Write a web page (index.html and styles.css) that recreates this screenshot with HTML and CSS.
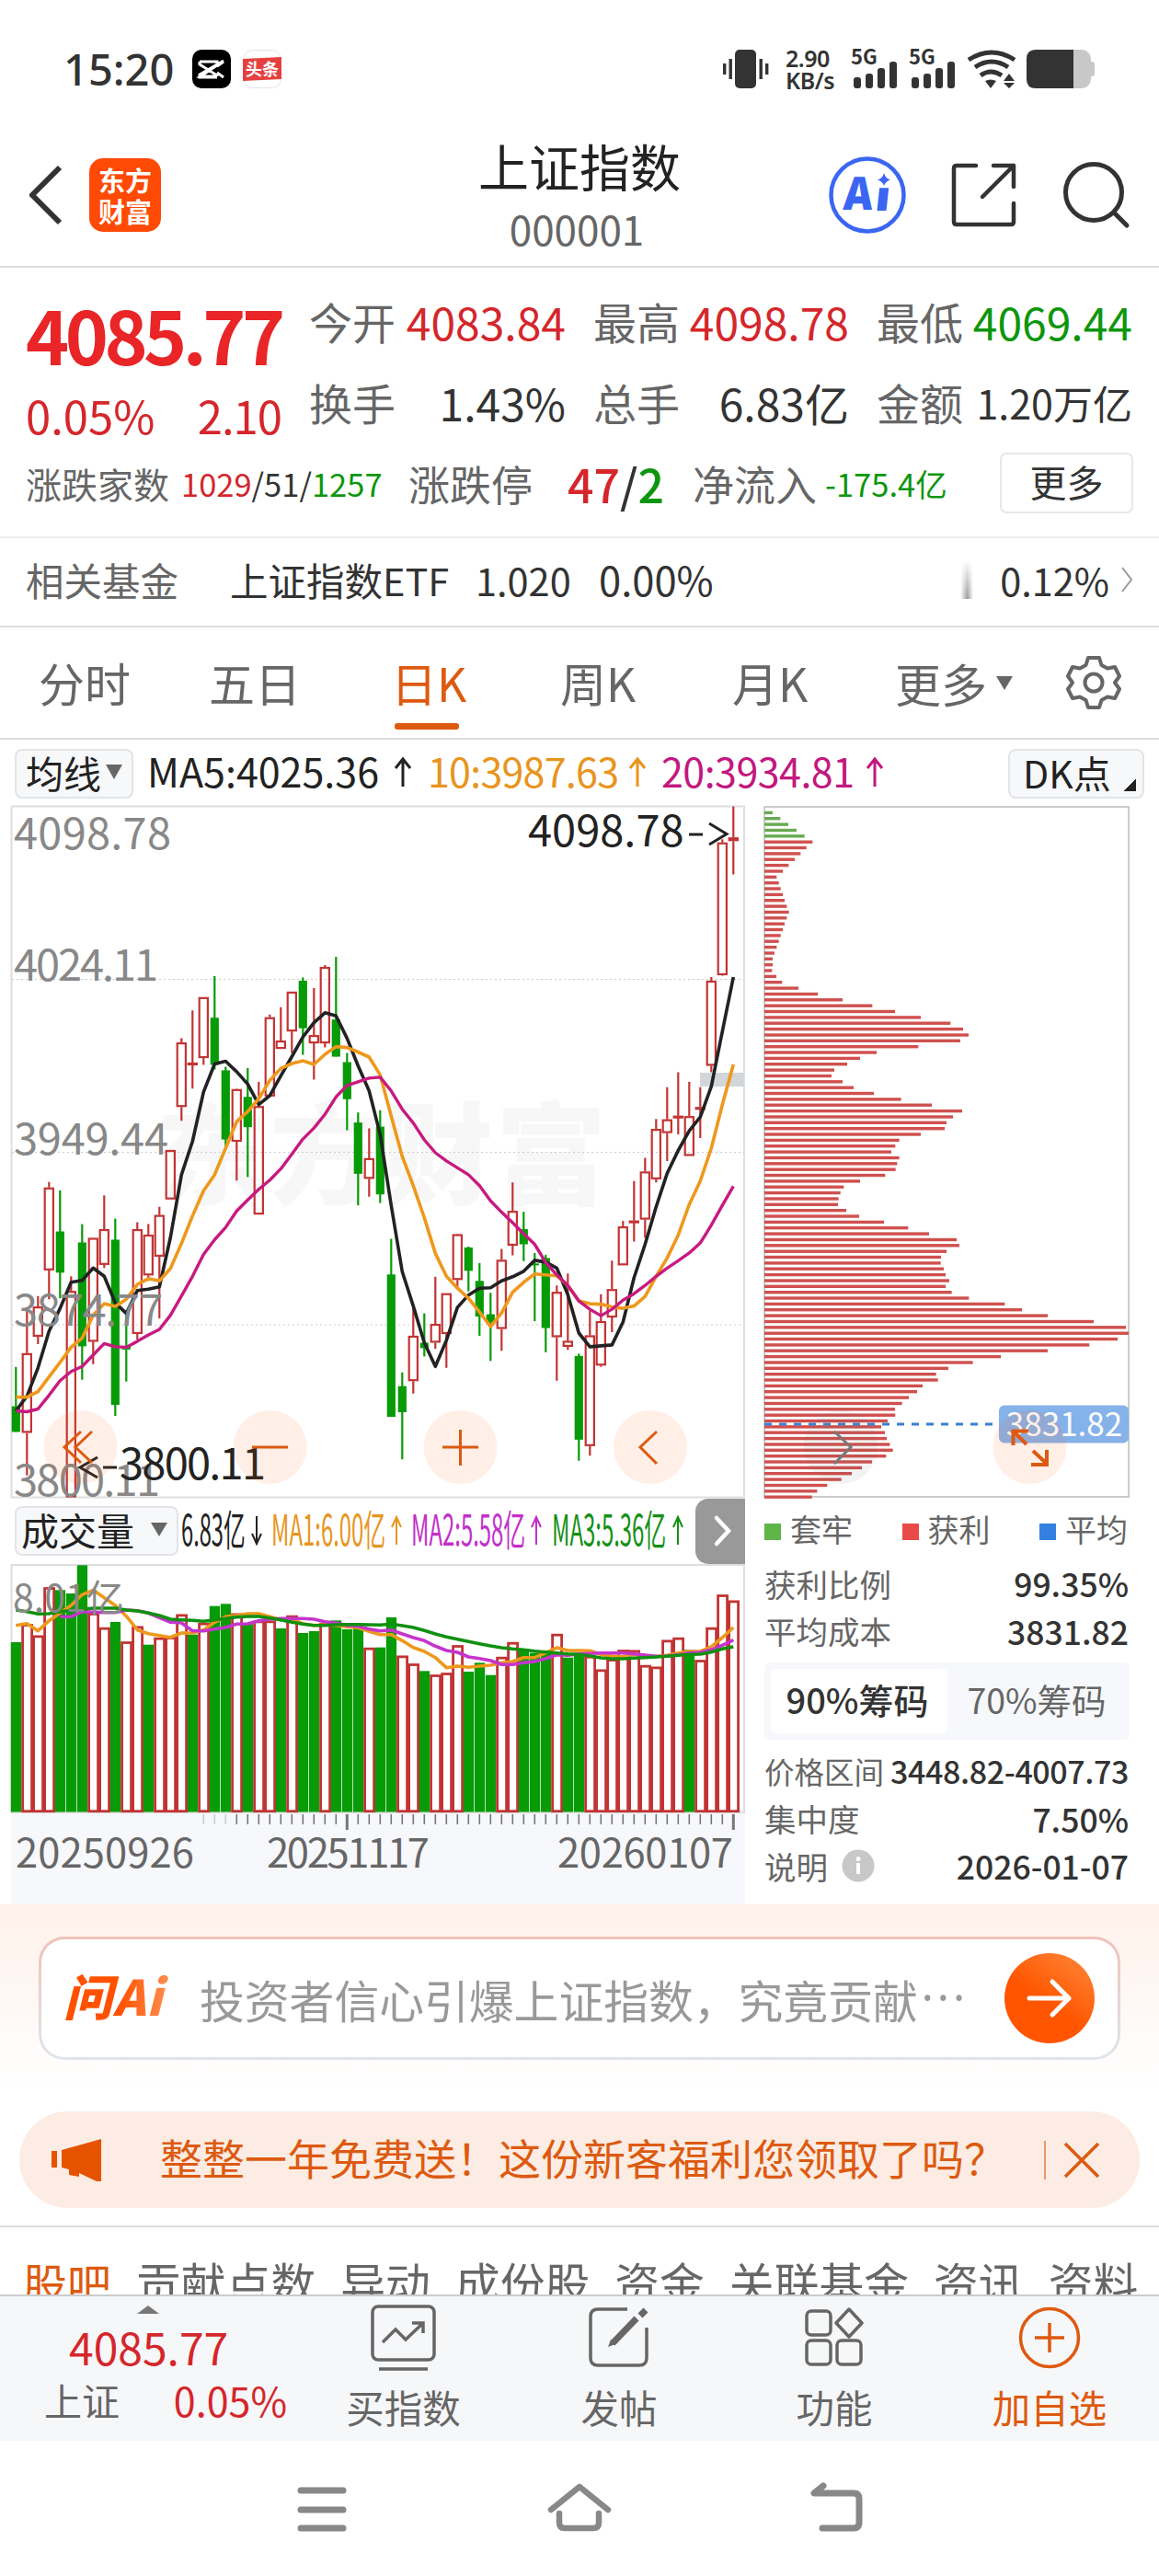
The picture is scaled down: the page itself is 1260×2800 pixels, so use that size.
FILE: index.html
```html
<!DOCTYPE html>
<html lang="zh-CN">
<head>
  <meta charset="UTF-8" />
  <meta name="viewport" content="width=device-width, initial-scale=1" />
  <title>上证指数 000001</title>
  <link rel="stylesheet" href="styles.css">
</head>
<body>
  <div class="phone">

    <!-- Status bar -->
    <div class="status">
      <span class="clock">15:20</span>
      <svg class="app-icon" width="42" height="42" viewBox="0 0 42 42">
        <rect width="42" height="42" rx="10" fill="#000"/>
        <path d="M8 13h19v4L9 29h18M8 13v3l19 12v1M34 12L8 27v3h19M27 18l7 -5M27 25l7 5" fill="none" stroke="#fff" stroke-width="3"/>
      </svg>
      <svg class="app-icon" width="42" height="42" viewBox="0 0 42 42">
        <rect x=".5" y=".5" width="41" height="41" rx="10" fill="#fff" stroke="#e4e4e4"/>
        <path d="M0 10L42 8V32L0 34Z" fill="#e5403f"/>
        <text x="21" y="28" font-size="18" font-weight="700" fill="#fff" text-anchor="middle">头条</text>
      </svg>
      <div class="status-right">
        <svg width="50" height="42" viewBox="0 0 50 42" fill="#333">
          <rect x="13" y="0" width="23" height="42" rx="5"/>
          <rect x="0" y="15" width="3.4" height="12"/><rect x="6.5" y="10" width="3.4" height="22"/>
          <rect x="39.500" y="10" width="3.4" height="22"/><rect x="46" y="15" width="3.4" height="12"/>
        </svg>
        <div class="speed"><span>2.90</span><span>KB/s</span></div>
        <svg class="signal" width="52" height="42" viewBox="0 0 52 42" fill="#333">
          <text x="0" y="16" font-size="22" font-weight="700">5G</text>
          <rect x="3" y="30" width="8" height="12" rx="3"/><rect x="16" y="26" width="8" height="16" rx="3"/>
          <rect x="29" y="20" width="8" height="22" rx="3"/><rect x="42" y="13" width="8" height="29" rx="3"/>
        </svg>
        <svg class="signal" width="52" height="42" viewBox="0 0 52 42" fill="#333">
          <text x="0" y="16" font-size="22" font-weight="700">5G</text>
          <rect x="3" y="30" width="8" height="12" rx="3"/><rect x="16" y="26" width="8" height="16" rx="3"/>
          <rect x="29" y="20" width="8" height="22" rx="3"/><rect x="42" y="13" width="8" height="29" rx="3"/>
        </svg>
        <svg class="wifi" width="54" height="42" viewBox="0 0 54 42">
          <path d="M2 11Q27 -5 52 11M9 19Q27 7 45 19M15 28Q26 20 38 28" fill="none" stroke="#333" stroke-width="5"/>
          <path d="M20 34Q26 31 32 34L26 42ZM40 34L46 26L52 34ZM40 36H52L46 42Z" fill="#333"/>
        </svg>
        <svg width="74" height="42" viewBox="0 0 74 42">
          <rect width="70" height="42" rx="10" fill="#c8c8c8"/><rect x="66" y="13" width="8" height="16" rx="3" fill="#c8c8c8"/>
          <path d="M10 0H51V42H10Q0 42 0 32V10Q0 0 10 0Z" fill="#333"/>
        </svg>
      </div>
    </div>

    <!-- Title bar -->
    <header class="topbar">
      <div class="topbar-left">
        <svg width="38" height="66" viewBox="0 0 38 66"><path d="M35 3L5 33L35 63" fill="none" stroke="#333" stroke-width="6" stroke-linejoin="round"/></svg>
        <div class="logo"><span>东方</span><span>财富</span></div>
      </div>
      <div class="title">
        <h1>上证指数</h1>
        <p>000001</p>
      </div>
      <div class="topbar-right">
        <svg width="84" height="86" viewBox="0 0 84 86">
          <circle cx="42" cy="43" r="39.500" fill="#fff" stroke="#3a66f2" stroke-width="4.500"/>
          <g class="ai-mark" font-size="50" font-weight="900" fill="#3a66f2">
            <text transform="translate(15 59) skewX(-4) scale(.88 1)">A</text>
            <text transform="translate(49 60) skewX(-6) scale(1.050 .9)">ı</text>
          </g>
          <path d="M60 19Q61.500 25 67 26.500Q61.500 28 60 33Q58.500 28 53 26.500Q58.500 25 60 19Z" fill="#3a66f2"/>
        </svg>
        <svg width="72" height="72" viewBox="0 0 72 72" fill="none" stroke="#333" stroke-width="4.500" stroke-linecap="round" stroke-linejoin="round">
          <path d="M27 4H6Q3 4 3 7V65Q3 68 6 68H65Q68 68 68 65V45"/><path d="M46 4H68V27M68 4L34 38"/>
        </svg>
        <svg width="74" height="74" viewBox="0 0 74 74" fill="none" stroke="#333" stroke-width="5"><circle cx="34" cy="34" r="30.500"/><path d="M56 56L70 70" stroke-linecap="round"/></svg>
      </div>
    </header>

    <!-- Quote -->
    <section class="quote">
      <div class="quote-main">
        <div class="price-col">
          <div class="price">4085.77</div>
          <div class="change"><span>0.05%</span><span class="amount">2.10</span></div>
        </div>
        <dl class="stats">
          <div><dt>今开</dt><dd class="up">4083.84</dd></div>
          <div><dt>最高</dt><dd class="up">4098.78</dd></div>
          <div><dt>最低</dt><dd class="down">4069.44</dd></div>
          <div><dt>换手</dt><dd>1.43%</dd></div>
          <div><dt>总手</dt><dd>6.83亿</dd></div>
          <div><dt>金额</dt><dd class="tight">1.20万亿</dd></div>
        </dl>
      </div>
      <div class="breadth">
        <span class="b-label small">涨跌家数</span>
        <span class="b-count"><i class="up">1029</i>/51/<i class="down">1257</i></span>
        <span class="b-label">涨跌停</span>
        <span class="b-limit"><i class="up">47</i>/<i class="down">2</i></span>
        <span class="b-label">净流入</span>
        <span class="b-flow down">-175.4亿</span>
        <button class="more-btn">更多</button>
      </div>
    </section>

    <section class="fund">
      <span class="fund-label">相关基金</span>
      <span class="fund-name">上证指数ETF</span>
      <span class="fund-price">1.020</span>
      <span class="fund-rate">0.00%</span>
      <span class="fund-fade"></span>
      <span class="fund-next">0.12%</span>
      <svg width="14" height="28" viewBox="0 0 14 28"><path d="M2 1L12 14L2 27" fill="none" stroke="#999" stroke-width="2"/></svg>
    </section>

    <!-- Period tabs -->
    <nav class="periods">
      <span>分时</span>
      <span>五日</span>
      <span class="active">日K</span>
      <span>周K</span>
      <span>月K</span>
      <span class="drop">更多<svg width="18" height="15" viewBox="0 0 18 15"><path d="M0 0H18L9 15Z" fill="#666"/></svg></span>
      <svg class="gear" width="60" height="60" viewBox="0 0 60 60" fill="none" stroke="#666" stroke-width="4" stroke-linejoin="round">
        <path d="M24 3H36L38.500 11L45 14.500L53 13L58 23L53 30L58 37L53 47L45 45.500L38.500 49L36 57H24L21.500 49L15 45.500L7 47L2 37L7 30L2 23L7 13L15 14.500L21.500 11Z"/>
        <circle cx="30" cy="30" r="9.500"/>
      </svg>
    </nav>

    <!-- Chart area -->
    <div class="ma-row">
      <div class="pill">均线<svg width="18" height="16" viewBox="0 0 18 16"><path d="M0 0H18L9 16Z" fill="#666"/></svg></div>
      <svg class="ma-text" width="820" height="56" viewBox="0 0 820 56">
        <g font-size="43">
          <text x="-3" y="44" fill="#222">MA5:4025.36</text>
          <text x="302" y="44" fill="#e8951e" textLength="208">10:3987.63</text>
          <text x="556" y="44" fill="#c2187f" textLength="210">20:3934.81</text>
        </g>
        <g fill="none" stroke-width="3">
          <path d="M275 43V13M267 23L275 13L283 23" stroke="#222"/>
          <path d="M530 43V13M522 23L530 13L538 23" stroke="#e8951e"/>
          <path d="M788 43V13M780 23L788 13L796 23" stroke="#c2187f"/>
        </g>
      </svg>
      <div class="pill dk">DK点</div>
    </div>

    <div class="charts">
      <div class="left-col">
        <svg id="kline" width="798" height="752" viewBox="12 876 798 752"></svg>
        <div class="vol-head">
          <div class="pill">成交量<svg width="18" height="15" viewBox="0 0 18 15"><path d="M0 0H18L9 15Z" fill="#666"/></svg></div>
          <svg class="vol-text" width="554" height="56" viewBox="196 1638 554 56">
            <g font-size="46">
              <text transform="translate(197 1682) scale(.515 1)" fill="#222">6.83亿</text>
              <text transform="translate(295 1682) scale(.520 1)" fill="#e8951e">MA1:6.00亿</text>
              <text transform="translate(447 1682) scale(.520 1)" fill="#c22fc9">MA2:5.58亿</text>
              <text transform="translate(600 1682) scale(.520 1)" fill="#159015">MA3:5.36亿</text>
            </g>
            <g fill="none" stroke-width="2">
              <path d="M279 1650V1680M274 1669L279 1680L284 1669" stroke="#222"/>
              <path d="M431 1681V1651M426 1662L431 1651L436 1662" stroke="#e8951e"/>
              <path d="M583 1681V1651M578 1662L583 1651L588 1662" stroke="#c22fc9"/>
              <path d="M737 1681V1651M732 1662L737 1651L742 1662" stroke="#159015"/>
            </g>
          </svg>
          <div class="scroll-tab"><svg width="20" height="34" viewBox="0 0 20 34"><path d="M3 3L16 17L3 31" fill="none" stroke="#fff" stroke-width="4.500" stroke-linecap="round"/></svg></div>
        </div>
        <svg id="volume" width="798" height="370" viewBox="12 1700 798 370"></svg>
      </div>

      <div class="right-col">
        <svg id="chips" width="398" height="752" viewBox="830 876 398 752"></svg>
        <div class="legend">
          <span><b class="sq green"></b>套牢</span>
          <span><b class="sq red"></b>获利</span>
          <span><b class="sq blue"></b>平均</span>
        </div>
        <div class="chip-row"><span>获利比例</span><strong>99.35%</strong></div>
        <div class="chip-row"><span>平均成本</span><strong>3831.82</strong></div>
        <div class="toggle"><span class="on">90%筹码</span><span>70%筹码</span></div>
        <div class="chip-row range"><span>价格区间</span><strong>3448.82-4007.73</strong></div>
        <div class="chip-row"><span>集中度</span><strong>7.50%</strong></div>
        <div class="chip-row"><span>说明<svg width="36" height="36" viewBox="0 0 36 36"><circle cx="18" cy="18" r="17.500" fill="#c8c8c8"/><path d="M18 15V27" stroke="#fff" stroke-width="4"/><circle cx="18" cy="10.500" r="2.500" fill="#fff"/></svg></span><strong>2026-01-07</strong></div>
      </div>

      <!-- Floating chart controls -->
      <svg class="controls" width="1260" height="84" viewBox="0 1531 1260 84" fill="none" stroke="#dd5a10" stroke-width="3">
        <g fill="rgba(255,100,20,.1)" stroke="none">
          <circle cx="87.500" cy="1573" r="40"/><circle cx="293.500" cy="1573" r="40"/><circle cx="500.500" cy="1573" r="40"/>
          <circle cx="707" cy="1573" r="40"/><circle cx="1119.500" cy="1573" r="40"/>
        </g>
        <circle cx="914" cy="1573" r="40" fill="rgba(100,100,100,.08)" stroke="none"/>
        <path d="M88 1556L70 1573L88 1590M100 1556L82 1573L100 1590"/>
        <path d="M274 1573H313"/>
        <path d="M481 1573H520M500.500 1554V1593"/>
        <path d="M714 1556L696 1573L714 1591"/>
        <path d="M907 1556L925 1573L907 1591" stroke="#777"/>
        <path d="M1116 1570L1102 1556M1101.500 1571V1555.500H1118M1123 1577L1138 1591M1138 1576V1592H1121" stroke-width="4"/>
      </svg>
    </div>

    <!-- Ask AI -->
    <section class="ask">
      <div class="ask-box">
        <span class="ask-logo">问Ai</span>
        <span class="ask-hint">投资者信心引爆上证指数，究竟贡献<span>···</span></span>
        <span class="ask-go"><svg width="50" height="44" viewBox="0 0 50 44"><path d="M3 22H46M28 4L46 22L28 40" fill="none" stroke="#fff" stroke-width="5" stroke-linecap="round" stroke-linejoin="round"/></svg></span>
      </div>
    </section>

    <div class="promo">
      <svg width="56" height="48" viewBox="0 0 56 48" fill="#e65300"><path d="M0 14H6V32H0ZM11 13L54 1V47H49L30 38V42L19 40V34L11 32Z"/></svg>
      <span class="promo-text">整整一年免费送！这份新客福利您领取了吗？</span>
      <i class="promo-line"></i>
      <svg width="38" height="38" viewBox="0 0 38 38"><path d="M1 1L37 37M37 1L1 37" stroke="#dd5a10" stroke-width="3.500"/></svg>
    </div>

    <nav class="sections">
      <span class="active">股吧</span><span>贡献点数</span><span>异动</span><span>成份股</span><span>资金</span><span>关联基金</span><span>资讯</span><span>资料</span>
    </nav>

    <!-- Bottom toolbar -->
    <footer class="toolbar">
      <div class="mini">
        <svg width="24" height="9" viewBox="0 0 24 9"><path d="M0 9L12 0L24 9Z" fill="#777"/></svg>
        <div class="mini-price">4085.77</div>
        <div class="mini-row"><span>上证</span><b>0.05%</b></div>
      </div>
      <div class="tool">
        <svg width="72" height="72" viewBox="0 0 72 72" fill="none" stroke="#666" stroke-width="3.500"><rect x="2" y="2" width="67" height="58" rx="6"/><path d="M13 41L27 27L38 38L57 20M45 20H57V31M9 70H62"/></svg>
        <span>买指数</span>
      </div>
      <div class="tool">
        <svg width="72" height="72" viewBox="0 0 72 72" fill="none" stroke="#666" stroke-width="3.500"><path d="M45 5H13Q5 5 5 13V58Q5 66 13 66H58Q66 66 66 58V25"/><path d="M29 42L55 15" stroke-width="7"/><path d="M59 12L65 6" stroke-width="7"/><path d="M24 46L32 43L27 38Z" fill="#666" stroke="none"/></svg>
        <span>发帖</span>
      </div>
      <div class="tool">
        <svg width="72" height="72" viewBox="0 0 72 72" fill="none" stroke="#666" stroke-width="3.500"><rect x="6" y="7" width="26" height="26" rx="5"/><rect x="6" y="39" width="26" height="26" rx="5"/><rect x="39" y="39" width="26" height="26" rx="5"/><path d="M52 5L66 20L52 35L38 20Z" stroke-linejoin="round"/></svg>
        <span>功能</span>
      </div>
      <div class="tool add">
        <svg width="72" height="72" viewBox="0 0 72 72" fill="none" stroke="#dd5a10" stroke-width="3.500"><circle cx="36" cy="36" r="31.500"/><path d="M20 36H52M36 20V52"/></svg>
        <span>加自选</span>
      </div>
    </footer>

    <div class="sysnav">
      <svg width="54" height="54" viewBox="0 0 54 54" stroke="#888" stroke-width="7" stroke-linecap="round"><path d="M4 9H50M4 30H50M4 50H50"/></svg>
      <svg width="70" height="54" viewBox="0 0 70 54" fill="none" stroke="#888" stroke-width="6.500" stroke-linecap="round"><path d="M4 30L35 5L66 30" stroke-linejoin="round"/><path d="M13 34V44Q13 50 19 50H50Q56 50 56 44V34"/></svg>
      <svg width="60" height="54" viewBox="0 0 60 54" fill="none" stroke="#888" stroke-width="7" stroke-linecap="round" stroke-linejoin="round"><path d="M16 4L6 12H49Q55 12 55 18V44Q55 50 49 50H15"/></svg>
    </div>
  </div>

  <script src="chart.js"></script>
</body>
</html>
```
FILE: styles.css
```css
* {
  box-sizing: border-box;
}
body {
  margin: 0;
  background: #fff;
  color: #333;
  font-family: "Noto Sans CJK SC", "Noto Sans", sans-serif;
}
svg {
  display: block;
  flex: none;
  overflow: visible;
}
svg text {
  font-family: "Noto Sans CJK SC", "Noto Sans", sans-serif;
}
i {
  font-style: normal;
}
.phone {
  width: 1260px;
  height: 2800px;
  overflow: hidden;
}
.up {
  color: #d5262b;
}
.down {
  color: #0c960c;
}

/* status bar */
.status {
  display: flex;
  align-items: center;
  height: 134px;
  padding: 16px 70px 0 69px;
}
.clock {
  width: 140px;
  font-family: "Noto Sans", sans-serif;
  font-size: 47px;
  font-weight: 500;
}
.app-icon {
  margin-right: 13px;
}
.status-right {
  display: flex;
  align-items: center;
  margin-left: auto;
}
.speed {
  display: flex;
  flex-direction: column;
  width: 71px;
  padding-left: 18px;
  font-family: "Noto Sans", sans-serif;
  font-size: 25px;
  font-weight: 600;
  line-height: 24px;
  letter-spacing: -.5px;
}
.signal {
  margin-right: 11px;
}
.speed + .signal {
  margin-left: 18px;
}
.wifi {
  margin-right: 11px;
}
.ai-mark text {
  font-family: "Noto Sans", sans-serif;
}

/* title bar */
.topbar {
  display: grid;
  grid-template-columns: 400px 1fr 400px;
  height: 157px;
  border-bottom: 2px solid #ddd;
}
.topbar-left {
  display: flex;
  align-items: center;
  padding-left: 30px;
  gap: 29px;
}
.logo {
  display: flex;
  flex-direction: column;
  align-items: center;
  justify-content: center;
  width: 78px;
  height: 80px;
  border-radius: 15px;
  background: #ff4a05;
  color: #fff;
  font-size: 29px;
  font-weight: 700;
  line-height: 34px;
}
.title {
  text-align: center;
}
.title h1 {
  margin: 8px 0 0;
  font-size: 55px;
  font-weight: 400;
  line-height: 74px;
  color: #222;
}
.title p {
  margin: 2px 6px 0 0;
  font-size: 44px;
  line-height: 60px;
  color: #666;
}
.topbar-right {
  display: flex;
  align-items: center;
  justify-content: flex-end;
  gap: 49px;
  padding-right: 31px;
}

/* quote */
.quote {
  height: 294px;
  padding: 17px 28px 0 28px;
  border-bottom: 2px solid #eee;
}
.quote-main {
  display: flex;
  gap: 30px;
}
.price-col {
  width: 278px;
  flex: none;
}
.price {
  font-size: 80px;
  font-weight: 700;
  line-height: 108px;
  letter-spacing: -4.500px;
  white-space: nowrap;
  color: #e92527;
}
.change {
  display: flex;
  justify-content: space-between;
  font-size: 49px;
  line-height: 70px;
  color: #d5262b;
}
.change .amount {
  letter-spacing: -1px;
}
.stats {
  flex: 1;
  display: grid;
  grid-template-columns: 279px 278px 278px;
  grid-auto-rows: 88px;
  column-gap: 30px;
  margin: -3px 0 0;
  font-size: 47px;
  line-height: 88px;
}
.stats div {
  display: flex;
  justify-content: space-between;
  white-space: nowrap;
}
.stats dt {
  color: #666;
}
.stats dd {
  margin: 0;
  font-size: 48px;
}
.stats .tight {
  font-size: 43px;
}
.breadth {
  display: flex;
  align-items: center;
  height: 78px;
  white-space: nowrap;
}
.b-label {
  width: 136px;
  font-size: 45px;
  color: #666;
}
.b-label.small {
  width: 169px;
  font-size: 39px;
}
.b-count {
  width: 247px;
  font-size: 34.500px;
}
.b-limit {
  width: 173px;
  padding-left: 37px;
  font-size: 50px;
  font-weight: 500;
}
.b-flow {
  padding-left: 8px;
  font-size: 34.500px;
}
.more-btn {
  width: 145px;
  height: 66px;
  margin-left: auto;
  padding: 0 0 6px;
  border: 2px solid #e8e8e8;
  border-radius: 7px;
  background: #fff;
  color: #333;
  font-family: inherit;
  font-size: 40px;
}

/* related fund */
.fund {
  display: flex;
  align-items: center;
  height: 97px;
  padding: 0 28px 6px;
  border-bottom: 2px solid #ddd;
  font-size: 41.500px;
  white-space: nowrap;
}
.fund-label {
  width: 222px;
  color: #666;
}
.fund-name {
  width: 267px;
}
.fund-price {
  width: 134px;
}
.fund-rate {
  font-size: 43.500px;
}
.fund-fade {
  width: 14px;
  height: 42px;
  margin-left: auto;
  background: linear-gradient(90deg, #fff, #999 55%, #fff);
  -webkit-mask-image: linear-gradient(transparent, #000);
  mask-image: linear-gradient(transparent, #000);
}
.fund-next {
  margin: 0 12px 0 29px;
}

/* period tabs */
.periods {
  display: flex;
  height: 122px;
  padding-left: 42px;
  border-bottom: 2px solid #ddd;
  font-size: 50px;
  line-height: 118px;
  color: #666;
  white-space: nowrap;
}
.periods span {
  width: 185px;
}
.periods span:nth-child(2) {
  width: 198px;
}
.periods .active {
  display: flex;
  flex-direction: column;
  width: 184px;
  color: #dd5a10;
}
.periods .active::after {
  content: "";
  width: 70px;
  height: 7px;
  margin: -14px 0 0 4px;
  border-radius: 3px;
  background: #dd5a10;
}
.periods span:nth-child(4) {
  width: 187px;
}
.periods span:nth-child(5) {
  width: 177px;
}
.periods .drop {
  display: flex;
  align-items: center;
  gap: 10px;
}
.periods .gear {
  margin: 30px 0 0 1px;
}

/* indicator row */
.pill {
  display: flex;
  align-items: center;
  height: 54px;
  padding: 0 10px 4px;
  border: 2px solid #e2e4e8;
  border-radius: 8px;
  background: #f7f8fa;
  color: #222;
  font-size: 41px;
  line-height: 50px;
  white-space: nowrap;
}
.ma-row {
  display: flex;
  align-items: center;
  height: 72px;
  padding: 0 16px 0 16px;
}
.ma-row .pill {
  gap: 5px;
  margin-top: 1px;
}
.ma-text {
  margin: 0 auto 0 18px;
}
.ma-row .dk {
  width: 148px;
  padding-left: 14px;
  background: linear-gradient(135deg, transparent 50%, #222 50%) right 7px bottom 6px / 14px 14px no-repeat, #f7f8fa;
}

/* charts */
.charts {
  position: relative;
  display: flex;
  gap: 20px;
  height: 1194px;
  padding-left: 12px;
}
.left-col {
  width: 798px;
}
.right-col {
  width: 398px;
}
.controls {
  position: absolute;
  left: 0;
  top: 655px;
}
.vol-head {
  display: flex;
  align-items: center;
  height: 72px;
  padding-left: 4px;
}
.vol-head .pill {
  width: 178px;
  padding: 0 10px 4px 5px;
  justify-content: space-between;
}
.vol-text {
  margin-left: 2px;
}
.scroll-tab {
  display: flex;
  align-items: center;
  width: 54px;
  height: 71px;
  margin-left: auto;
  padding-left: 20px;
  border-radius: 14px 0 0 14px;
  background: #999;
}
.legend {
  display: flex;
  justify-content: space-between;
  height: 67px;
  margin: 0 2px 0 1px;
  font-size: 34px;
  line-height: 70px;
  color: #666;
}
.legend span {
  display: flex;
  align-items: center;
  gap: 10px;
}
.sq {
  width: 18px;
  height: 18px;
  margin-top: 7px;
}
.sq.green { background: #5fb548; }
.sq.red { background: #e84a48; }
.sq.blue { background: #3380e0; }
.chip-row {
  display: flex;
  align-items: center;
  justify-content: space-between;
  height: 51.500px;
  padding: 0 1px;
  font-size: 34.500px;
  color: #666;
  white-space: nowrap;
}
.chip-row span {
  display: flex;
  align-items: center;
  gap: 15px;
}
.chip-row strong {
  color: #333;
  font-size: 35.500px;
  font-weight: 500;
}
.chip-row.range span {
  font-size: 32.500px;
}
.chip-row.range strong {
  font-size: 34px;
  letter-spacing: -.4px;
}
.toggle {
  display: grid;
  grid-template-columns: 192px 1fr;
  height: 84px;
  margin: 9px 0 8px 1px;
  padding: 7px 0 7px 7px;
  border-radius: 6px;
  background: #f7f8fb;
  font-size: 37.500px;
  line-height: 65px;
  text-align: center;
  color: #666;
}
.toggle span {
  padding-right: 4px;
}
.toggle .on {
  border-radius: 6px;
  background: #fff;
  color: #333;
  font-size: 38px;
  font-weight: 500;
}

/* ask ai */
.ask {
  height: 225px;
  padding: 35px 42px 0;
  background: linear-gradient(#fef1ea, #fff 90%);
}
.ask-box {
  display: flex;
  align-items: center;
  height: 134px;
  padding: 0 25px 0 24px;
  border: 3px solid transparent;
  border-radius: 28px;
  background: linear-gradient(#fff, #fff) padding-box, linear-gradient(#f0c2b8, #dfe5ee) border-box;
}
.ask-logo {
  flex: none;
  width: 148px;
  padding-bottom: 8px;
  font-size: 53px;
  font-weight: 900;
  font-style: italic;
  letter-spacing: 1px;
  background: linear-gradient(90deg, #ff5100 40%, #ff8a4a 75%);
  -webkit-background-clip: text;
  background-clip: text;
  color: transparent;
}
.ask-hint {
  flex: none;
  display: flex;
  font-size: 48.800px;
  color: #999;
  white-space: nowrap;
}
.ask-hint span {
  margin-left: 4px;
  font-family: "Noto Sans", sans-serif;
  letter-spacing: 4px;
}
.ask-go {
  display: flex;
  flex: none;
  align-items: center;
  justify-content: center;
  width: 98px;
  height: 98px;
  margin-left: auto;
  border-radius: 50%;
  background: linear-gradient(215deg, #ff8a3c, #ff5500 55%);
}

.promo {
  display: flex;
  align-items: center;
  height: 105px;
  margin: 0 21px;
  padding: 0 44px 0 35px;
  border-radius: 53px;
  background: #fcece3;
  color: #dd5a10;
}
.promo-text {
  margin: -7px 0 0 62px;
  font-size: 46px;
  white-space: nowrap;
}
.promo-line {
  width: 2px;
  height: 42px;
  margin: 0 20px 0 auto;
  background: #e59a6c;
}

.sections {
  display: flex;
  gap: 27px;
  height: 75px;
  margin-top: 19px;
  padding-left: 25px;
  border-top: 2px solid #ddd;
  overflow: hidden;
  font-size: 48.800px;
  line-height: 118px;
  white-space: nowrap;
  color: #666;
}
.sections .active {
  font-size: 48px;
  color: #dd5a10;
}

/* bottom toolbar */
.toolbar {
  display: grid;
  grid-template-columns: 321px 235px 234px 234px 234px;
  height: 159px;
  border-top: 2px solid #ccc;
  background: #f6f7f9;
  color: #666;
}
.mini {
  padding-top: 10px;
}
.mini > svg {
  margin-left: 149px;
}
.mini-price {
  margin-left: 75px;
  font-size: 48px;
  line-height: 64px;
  margin-top: 3px;
  color: #d5262b;
}
.mini-row {
  display: flex;
  justify-content: space-between;
  align-items: center;
  padding: 0 9px 0 48px;
  font-size: 41px;
  line-height: 52px;
}
.mini-row b {
  font-size: 43px;
  font-weight: 400;
  color: #d5262b;
}
.tool {
  display: flex;
  flex-direction: column;
  align-items: center;
  padding-top: 9px;
  font-size: 41.500px;
  line-height: 78px;
}
.tool.add {
  color: #dd5a10;
}
.sysnav {
  display: flex;
  align-items: center;
  height: 147px;
  padding: 0 0 4px 323px;
}
.sysnav svg + svg {
  margin-left: 218px;
}
.sysnav svg:last-child {
  margin-left: 214px;
}
```
FILE: chart.js
```js
const RED = '#c23434', GREEN = '#079b07';
const STEP = 12;
const X0 = 17.3;

// type, high, low, body top, body bottom
const candles = [
  ['g',1258,1400,1344,1400],['r',1130,1495,1228,1402],['r',1103,1208,1126,1192],['r',854,1110,866,1047],
  ['g',872,1108,962,1052],['r',1060,1543,1092,1543],['g',946,1286,986,1213],['r',976,1252,976,1203],
  ['r',883,1042,957,1035],['g',934,1365,980,1341],['g',1135,1290,1212,1220],['r',942,1198,957,1186],
  ['r',946,1070,969,1058],['r',908,1152,926,1017],['r',784,892,784,892],['r',540,720,549,690],
  ['r',479,650,593,599],['r',450,598,450,583],['g',404,608,495,598],['g',602,775,610,761],
  ['r',650,851,651,766],['g',605,843,668,734],['r',635,925,688,925],['r',488,668,494,667],
  ['r',472,563,545,563],['r',438,572,438,525],['g',407,576,414,518],['r',430,630,533,551],
  ['r',380,560,384,551],['g',362,580,499,580],['g',572,741,592,673],['g',702,905,724,836],
  ['r',737,886,802,847],['g',697,900,733,881],['g',978,1367,1056,1367],['g',1270,1460,1300,1357],
  ['r',1130,1316,1190,1289],['g',1141,1235,1205,1217],['r',1061,1218,1164,1205],['r',1097,1260,1097,1186],
  ['r',967,1085,968,1068],['g',995,1093,997,1048],['g',1031,1190,1070,1148],['g',1096,1245,1143,1160],
  ['r',1000,1223,1024,1175],['r',855,1014,917,993],['g',919,1027,957,990],['g',1009,1158,1032,1035],
  ['g',1013,1226,1020,1173],['r',1080,1288,1094,1193],['r',1054,1221,1201,1214],['g',1229,1463,1234,1417],
  ['r',1135,1452,1189,1431],['r',1099,1258,1158,1255],['r',1026,1182,1088,1150],['r',939,1036,951,1036],
  ['r',852,984,938,943],['r',801,976,831,936],['r',716,855,738,848],['r',647,808,717,747],
  ['r',614,750,709,713],['r',635,797,710,797],['r',647,758,690,693],['r',406,614,414,600],
  ['r',105,403,112,402],['r',33,182,101,109]
];
const ma5 = [1354,1322,1260,1180,1130,1073,1069,1042,1060,1118,1141,1091,1088,1083,975,838,765,657,596,590,613,640,685,665,622,580,537,506,484,491,540,600,655,750,905,1050,1125,1205,1257,1200,1128,1101,1086,1085,1070,1061,1049,1025,1029,1042,1100,1184,1214,1212,1210,1160,1063,990,908,835,785,742,712,645,525,406];
const ma10 = [1324,1324,1312,1280,1248,1215,1195,1145,1120,1126,1110,1078,1065,1070,1043,988,928,873,838,780,722,700,672,632,606,595,589,597,575,558,560,570,581,620,710,798,862,932,1010,1060,1086,1108,1138,1170,1140,1095,1073,1055,1057,1059,1080,1114,1120,1121,1127,1130,1125,1104,1060,1020,970,903,852,780,685,597];
const ma20 = [1354,1356,1350,1320,1288,1268,1257,1232,1207,1214,1215,1202,1188,1176,1145,1103,1060,1012,980,953,917,893,870,850,825,793,760,736,706,668,643,635,627,625,655,695,725,762,790,808,823,838,862,895,920,943,967,990,1030,1057,1080,1114,1132,1146,1132,1112,1098,1080,1060,1042,1026,1009,987,948,905,863];

const volColors = 'grrrgggrrgrrgrrrgrggrgrrgrggrgggrggrrgrrrgggrrgggrggrrrrrrrrrgrrrr';
const vols = [495,436,473,316,325,336,244,400,447,429,493,443,503,480,478,404,470,432,377,370,401,436,425,425,450,408,465,459,432,424,453,450,513,512,414,539,565,589,601,595,505,591,562,602,543,495,518,530,525,468,545,535,540,584,550,520,521,570,575,488,480,520,553,447,340,359];
const vma1 = [440,434,458,425,400,375,340,325,350,375,410,455,467,473,479,465,465,455,430,412,408,402,402,412,422,420,435,440,438,440,445,448,460,470,470,490,512,525,545,578,573,577,573,570,562,558,545,545,530,513,522,522,523,535,540,542,535,540,542,538,530,525,525,510,480,447];
const vma2 = [412,412,395,397,398,398,390,392,400,415,430,432,458,458,452,447,436,435,425,420,418,418,418,420,428,432,440,443,452,458,455,468,480,490,508,522,528,543,548,555,568,568,562,558,548,536,538,533,532,530,530,530,533,537,541,540,536,530,528,520,505,488];
const vma3 = [390,395,403,402,395,392,388,384,384,384,390,393,400,408,420,422,424,427,422,418,413,411,411,416,422,430,436,440,440,438,437,437,438,439,436,441,447,457,468,478,485,493,500,507,513,517,520,524,527,530,533,535,540,546,549,549,547,545,543,541,538,535,534,527,517,510];

const chips = [120,145,171,198,224,250,230,211,192,172,153,133,140,146,153,159,166,173,166,159,153,146,140,133,126,120,120,118,132,151,204,267,348,445,519,603,700,741,759,732,595,459,405,363,321,312,348,384,450,539,639,738,708,687,681,603,533,520,507,533,526,521,487,405,352,341,335,333,360,402,483,562,630,720,729,687,669,668,678,684,696,684,704,760,877,933,1017,1167,1272,1281,1245,1153,1017,864,773,693,653,659,609,591,564,542,519,520,495,474,486,492,502,512,490,444,411,378,344,298,265,248];

const ky = v => 860 + v / 2.0103;
const vy = v => 1620 + v / 3;
const cx = i => X0 + i * STEP;

function line(values, y, color, width, start = 0) {
  const pts = values.map((v, i) => cx(i + start).toFixed(1) + ',' + y(v).toFixed(1)).join(' ');
  return `<polyline points="${pts}" fill="none" stroke="${color}" stroke-width="${width}" stroke-linejoin="round"/>`;
}

function drawKline() {
  let s = '<text x="170" y="1300" font-size="120" font-weight="900" letter-spacing="3" fill="#f7f7f7">东方财富</text>';
  s += '<rect x="12.500" y="876.500" width="796.500" height="751" fill="none" stroke="#dedede" stroke-width="2"/>';
  [1064.5, 1252.5, 1440].forEach(y => {
    s += `<path d="M13 ${y}H809" stroke="#ccc" stroke-width="1" stroke-dasharray="2 3"/>`;
  });
  s += '<rect x="761" y="1166" width="48" height="15" fill="#d3d6d9"/>';
  candles.forEach(([t, hi, lo, top, bot], i) => {
    const x = cx(i);
    if (t === 'g') {
      s += `<path d="M${x} ${ky(hi)}V${ky(lo)}" stroke="${GREEN}" stroke-width="2.2"/>`;
      s += `<rect x="${x - 4.6}" y="${ky(top)}" width="9.2" height="${Math.max(ky(bot) - ky(top), 2)}" fill="${GREEN}"/>`;
    } else {
      s += `<path d="M${x} ${ky(hi)}V${ky(top)}M${x} ${ky(bot)}V${ky(lo)}" stroke="${RED}" stroke-width="2.2"/>`;
      s += `<rect x="${x - 4.6}" y="${ky(top) + 1}" width="9.2" height="${Math.max(ky(bot) - ky(top) - 2, 1)}" fill="none" stroke="${RED}" stroke-width="2.2"/>`;
    }
  });
  s += line(ma5, ky, '#222', 3.6) + line(ma10, ky, '#ee981c', 3.6) + line(ma20, ky, '#c71a80', 3.4);
  s += '<g font-size="47" fill="#888">';
  [['4098.78', 922.5, 171], ['4024.11', 1066, 157], ['3949.44', 1254.5, 168], ['3874.77', 1441, 162], ['3800.11', 1625.5, 159]].forEach(([t, y, w]) => {
    s += `<text x="15" y="${y}" textLength="${w}">${t}</text>`;
  });
  s += '</g><g font-size="47" fill="#222"><text x="574" y="920">4098.78</text><text x="130" y="1608" textLength="159">3800.11</text></g>';
  s += '<path d="M749 907H764M771 895L790 906.500L771 918M106 1584L87 1595L106 1606M112 1595H127" fill="none" stroke="#222" stroke-width="3"/>';
  document.getElementById('kline').innerHTML = s;
}

function drawVolume() {
  const base = 1969.5;
  let s = '<rect x="12" y="1971" width="798" height="99" fill="#f7f8fb"/>';
  s += '<rect x="12.500" y="1701" width="796.500" height="269" fill="none" stroke="#dedede" stroke-width="2"/>';
  vols.forEach((v, i) => {
    const x = cx(i), top = vy(v);
    if (volColors[i] === 'g') {
      s += `<rect x="${x - 5.5}" y="${top}" width="11.3" height="${base - top}" fill="${GREEN}"/>`;
    } else {
      s += `<rect x="${x - 4.7}" y="${top + 1.2}" width="10" height="${base - top - 2}" fill="#fff" stroke="${RED}" stroke-width="2.8"/>`;
    }
  });
  s += line(vma1, vy, '#ee981c', 3.6) + line(vma2, vy, '#c435cc', 3.6, 4) + line(vma3, vy, '#109010', 3.6);
  s += '<text x="14" y="1752" font-size="41" fill="#888">8.01亿</text>';
  for (let i = 17; i < 66; i++) {
    const major = i === 30 || i === 65;
    const color = i < 20 ? '#ccc' : '#777';
    s += `<path d="M${cx(i)} 1972V${major ? 1989 : 1983}" stroke="${color}" stroke-width="${major ? 3 : 1.6}"/>`;
  }
  s += '<g font-size="43.500" fill="#666"><text x="17" y="2030" textLength="194">20250926</text>';
  s += '<text x="290" y="2030" textLength="177">20251117</text>';
  s += '<text x="606" y="2030" textLength="191">20260107</text></g>';
  document.getElementById('volume').innerHTML = s;
}

function drawChips() {
  let s = '<rect x="831" y="877" width="396" height="750" fill="none" stroke="#bbb" stroke-width="1.500"/>';
  chips.forEach((v, i) => {
    const y = ky(47 + i * 12.78);
    s += `<rect x="831" y="${(y - 1.7).toFixed(1)}" width="${(v - 93) / 3}" height="3.4" fill="${i < 5 ? '#68ab52' : '#cf504e'}"/>`;
  });
  s += '<path d="M831 1548H1079" stroke="#3b7fd0" stroke-width="3" stroke-dasharray="8 8"/>';
  s += '<rect x="1086" y="1527.500" width="141" height="41" rx="6" fill="#86b2ea"/>';
  s += '<text x="1157" y="1561" font-size="35" fill="#fff" text-anchor="middle">3831.82</text>';
  document.getElementById('chips').innerHTML = s;
}

drawKline();
drawVolume();
drawChips();
```
